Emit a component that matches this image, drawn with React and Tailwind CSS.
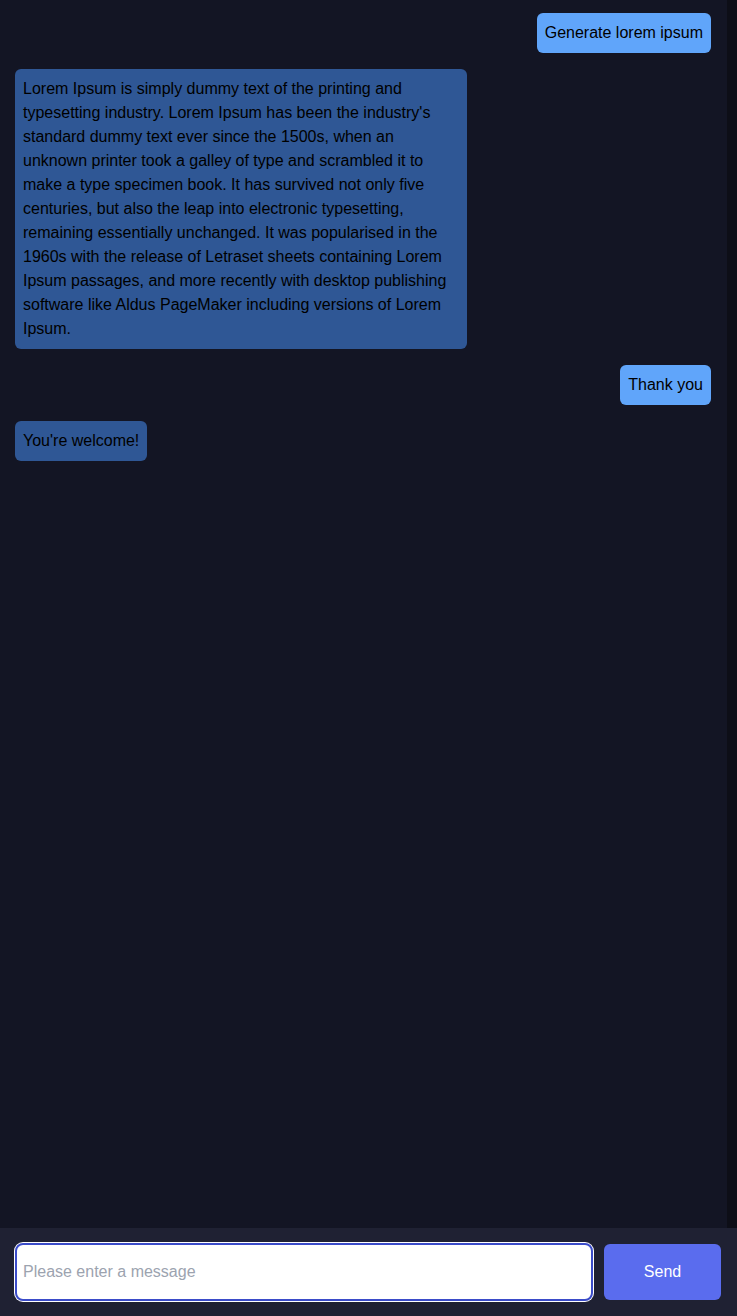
import React from "react";

const messages = [
  { from: "user", text: "Generate lorem ipsum" },
  {
    from: "bot",
    text: "Lorem Ipsum is simply dummy text of the printing and typesetting industry. Lorem Ipsum has been the industry's standard dummy text ever since the 1500s, when an unknown printer took a galley of type and scrambled it to make a type specimen book. It has survived not only five centuries, but also the leap into electronic typesetting, remaining essentially unchanged. It was popularised in the 1960s with the release of Letraset sheets containing Lorem Ipsum passages, and more recently with desktop publishing software like Aldus PageMaker including versions of Lorem Ipsum.",
  },
  { from: "user", text: "Thank you" },
  { from: "bot", text: "You're welcome!" },
];

export default function App() {
  return (
    <div className="flex h-[1316px] w-[737px] flex-col bg-[#131524] font-['Liberation_Sans',Arial,sans-serif] text-base leading-6">
      <div className="flex flex-1 overflow-hidden">
        <div className="flex flex-1 flex-col gap-4 px-4 pt-[13px]">
          {messages.map((m, i) =>
            m.from === "user" ? (
              <div key={i} className="flex justify-end">
                <div className="rounded-md bg-[#60a5fa] px-2 py-2 text-black">
                  {m.text}
                </div>
              </div>
            ) : (
              <div key={i} className="flex justify-start pl-[-1px]">
                <div className="-ml-px max-w-[452px] rounded-md bg-[#2f5795] px-2 py-2 text-black">
                  {m.text}
                </div>
              </div>
            ),
          )}
        </div>
        <div className="w-[10px] bg-[#0d0e17]"></div>
      </div>
      <div className="flex h-[88px] items-center gap-[11px] bg-[#1f2133] pl-[15px] pr-4">
        <div className="flex h-[58px] flex-1 items-center rounded-lg border-2 border-[#3b4cc9] bg-white px-[6px] ring-1 ring-white">
          <span className="text-[#9ca3af]">Please enter a message</span>
        </div>
        <button className="h-14 w-[117px] rounded-md bg-[#5a6cee] font-medium text-white">
          Send
        </button>
      </div>
    </div>
  );
}
